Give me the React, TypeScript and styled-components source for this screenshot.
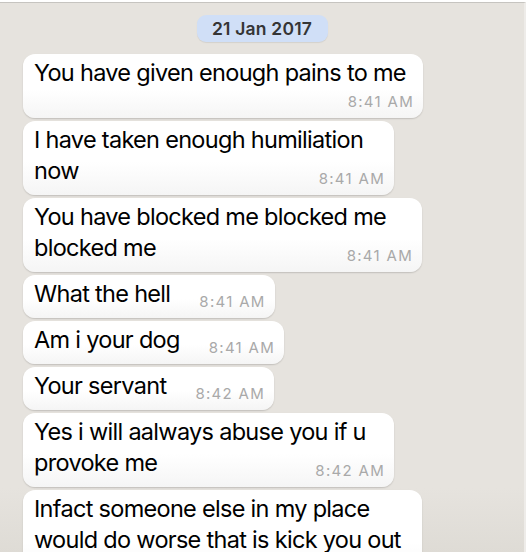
import React from "react";
import styled, { createGlobalStyle } from "styled-components";

const Global = createGlobalStyle`
  html, body {
    margin: 0;
    padding: 0;
    background: #ffffff;
    overflow: hidden;
  }
  body {
    font-family: Inter, "Liberation Sans", Arial, sans-serif;
    -webkit-font-smoothing: antialiased;
  }
`;

const Frame = styled.div`
  box-sizing: border-box;
  width: 526px;
  height: 552px;
  margin-top: 2px;
  border-top: 1px solid #c6c4c0;
  border-right: 2px solid #eeece9;
  background: linear-gradient(to bottom, #e6e3de 0%, #e6e3de 88%, #dedbd5 100%);
  display: flex;
  flex-direction: column;
  align-items: flex-start;
  padding: 12px 0 0 23px;
  gap: 3.5px;
  overflow: hidden;
`;

const DateRow = styled.div`
  align-self: stretch;
  display: flex;
  justify-content: center;
  margin: 0 0 8.5px -23px;
`;

const DatePill = styled.div`
  height: 27px;
  width: 131px;
  box-sizing: border-box;
  border-radius: 9px;
  background: #d0dff7;
  color: #353535;
  font-size: 17.5px;
  font-weight: 600;
  letter-spacing: 0.2px;
  display: flex;
  align-items: center;
  justify-content: center;
  box-shadow: 0 1px 1px rgba(0, 0, 0, 0.08);
`;

const Bubble = styled.div<{ $width?: number }>`
  flex: none;
  box-sizing: border-box;
  ${(p) => (p.$width ? `width: ${p.$width}px;` : "")}
  display: flex;
  flex-direction: column;
  padding: 3px 9px 8.5px 11px;
  border-radius: 12px;
  background: linear-gradient(to bottom, #ffffff 0%, #ffffff 55%, #f5f5f5 100%);
  box-shadow: 0 1px 1.5px rgba(0, 0, 0, 0.16);
`;

const Line = styled.div`
  font-size: 23.5px;
  line-height: 31px;
  letter-spacing: -0.7px;
  color: #000;
  white-space: nowrap;
`;

const LastRow = styled.div`
  display: flex;
  align-items: flex-end;
  justify-content: space-between;
  gap: 29px;
`;

const Time = styled.span<{ $below?: boolean }>`
  font-size: 15px;
  line-height: 15px;
  letter-spacing: 1.3px;
  color: #a9a9a9;
  white-space: nowrap;
  align-self: flex-end;
  ${(p) => (p.$below ? "margin-top: 6px;" : "")}
`;

type Msg = { lines: string[]; time: string; width?: number; below?: boolean };

const messages: Msg[] = [
  { lines: ["You have given enough pains to me"], time: "8:41 AM", width: 400, below: true },
  { lines: ["I have taken enough humiliation", "now"], time: "8:41 AM", width: 371 },
  { lines: ["You have blocked me blocked me", "blocked me"], time: "8:41 AM", width: 399 },
  { lines: ["What the hell"], time: "8:41 AM" },
  { lines: ["Am i your dog"], time: "8:41 AM" },
  { lines: ["Your servant"], time: "8:42 AM" },
  { lines: ["Yes i will aalways abuse you if u", "provoke me"], time: "8:42 AM", width: 371 },
  {
    lines: ["Infact someone else in my place", "would do worse that is kick you out"],
    time: "8:42 AM",
    width: 399,
    below: true,
  },
];

function Message({ m }: { m: Msg }) {
  const head = m.below ? m.lines : m.lines.slice(0, -1);
  const last = m.below ? null : m.lines[m.lines.length - 1];
  return (
    <Bubble $width={m.width}>
      {head.map((l, i) => (
        <Line key={i}>{l}</Line>
      ))}
      {last !== null ? (
        <LastRow>
          <Line>{last}</Line>
          <Time>{m.time}</Time>
        </LastRow>
      ) : (
        <Time $below>{m.time}</Time>
      )}
    </Bubble>
  );
}

export default function App() {
  return (
    <>
      <Global />
      <Frame>
        <DateRow>
          <DatePill>21 Jan 2017</DatePill>
        </DateRow>
        {messages.map((m, i) => (
          <Message key={i} m={m} />
        ))}
      </Frame>
    </>
  );
}
